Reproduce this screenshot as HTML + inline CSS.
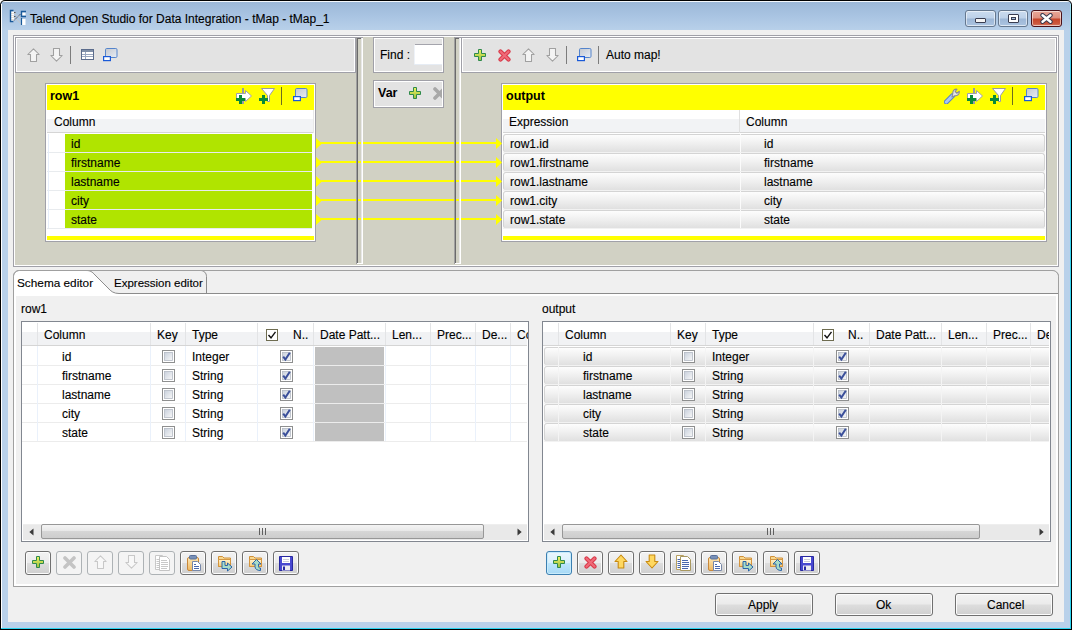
<!DOCTYPE html><html><head><meta charset="utf-8"><style>
html,body{margin:0;padding:0;width:1072px;height:630px;overflow:hidden;background:#fff}
body{position:relative;font-family:"Liberation Sans",sans-serif;font-size:12px;color:#000}
div,svg{position:absolute}
.t{white-space:nowrap;line-height:14px;height:14px;-webkit-text-stroke:0.12px #000}
.b{white-space:nowrap;line-height:14px;height:14px;font-weight:bold;font-size:12.5px}
</style></head><body>
<div style="left:0px;top:0px;width:1072px;height:630px;background:#000;border-radius:5px 5px 0 0"></div>
<div style="left:1px;top:1px;width:1070px;height:628px;background:linear-gradient(#f4f8fc 0px,#f4f8fc 1px,#9cb8d8 1px,#a9c4e2 15px,#b9d1ea 30px,#b9d1ea 100%);border-radius:4px 4px 0 0"></div>
<div style="left:1px;top:4px;width:1px;height:625px;background:#fff"></div>
<div style="left:1070px;top:4px;width:1px;height:625px;background:linear-gradient(#a8e4f4,#3ad4f0 60px,#2ad4f0)"></div>
<div style="left:1px;top:628px;width:1070px;height:1px;background:#2ad4f0"></div>
<div style="left:8px;top:30px;width:1056px;height:592px;background:#f0f0f0"></div>
<div class="t" style="left:30px;top:12px;color:#000">Talend Open Studio for Data Integration - tMap - tMap_1</div>
<svg style="left:8px;top:7px" width="20" height="20" viewBox="0 0 20 20">
<rect x="3" y="4.5" width="3" height="10" fill="#fff"/>
<path d="M3 6.5h3M3 8.5h3M3 10.5h3M3 12.5h3" stroke="#e0d8d0" stroke-width="0.8"/>
<path d="M5.5 3.5H2.5V14.5H5.5" stroke="#1a5a9a" stroke-width="1.4" fill="none"/>
<path d="M6 5.5L13.5 12.5M6 9.5L13.5 17.5" stroke="#c8c8c8" stroke-width="1"/>
<path d="M6 13.5L13.5 6" stroke="#404048" stroke-width="1" stroke-dasharray="1.2 0.8"/>
<path d="M6 5.5h1.5M6 9.5h1.5" stroke="#555" stroke-width="1"/>
<rect x="14" y="5.5" width="3.5" height="3" fill="#fff"/>
<path d="M18 4.5H13.5V9.5H18" stroke="#1a5a9a" stroke-width="1.4" fill="none"/>
<rect x="14" y="12" width="3.5" height="6" fill="#fff"/>
<path d="M13.5 11V18" stroke="#1a5a9a" stroke-width="1.2"/>
</svg>
<div style="left:965px;top:10px;width:31px;height:17px;box-sizing:border-box;border:1px solid #65788f;border-radius:3px;background:linear-gradient(#cbdcef 0,#bdd1e9 7px,#9db7d6 8px,#a9c2df 14px,#bcd2ea 100%);box-shadow:inset 0 0 0 1px rgba(255,255,255,.55)"></div>
<div style="left:998px;top:10px;width:30px;height:17px;box-sizing:border-box;border:1px solid #65788f;border-radius:3px;background:linear-gradient(#cbdcef 0,#bdd1e9 7px,#9db7d6 8px,#a9c2df 14px,#bcd2ea 100%);box-shadow:inset 0 0 0 1px rgba(255,255,255,.55)"></div>
<div style="left:1031px;top:10px;width:31px;height:17px;box-sizing:border-box;border:1px solid #4a1018;border-radius:3px;background:linear-gradient(#eaa898 0,#de9080 7px,#c6452a 8px,#cc5a40 13px,#dc8a78 100%);box-shadow:inset 0 0 0 1px rgba(255,255,255,.55)"></div>
<div style="left:975px;top:18px;width:11px;height:5px;box-sizing:border-box;border:1px solid #3a3e52;background:#f4f4f4;border-radius:1px"></div>
<div style="left:1008px;top:14px;width:11px;height:9px;box-sizing:border-box;border:1px solid #3a3e52;background:#fff;border-radius:1px"></div>
<div style="left:1011px;top:17px;width:5px;height:3px;box-sizing:border-box;border:1px solid #3a3e52;background:#a8c0dc"></div>
<svg style="left:1040px;top:13px" width="13" height="11" viewBox="0 0 13 11">
<path d="M2.5 2.2L10.5 8.8M10.5 2.2L2.5 8.8" stroke="#3a3a4e" stroke-width="4.4" stroke-linecap="round"/>
<path d="M2.5 2.2L10.5 8.8M10.5 2.2L2.5 8.8" stroke="#fff" stroke-width="2.4" stroke-linecap="round"/>
</svg>
<div style="left:13px;top:35px;width:1046px;height:232px;box-sizing:border-box;border:1px solid #a0a0a8"></div>
<div style="left:14px;top:36px;width:1044px;height:230px;box-sizing:border-box;border:1px solid #fff"></div>
<div style="left:15px;top:37px;width:1042px;height:228px;background:#d1d1c4"></div>
<div style="left:15px;top:37px;width:341px;height:36px;background:#e3e3e3"></div>
<div style="left:15px;top:37px;width:341px;height:36px;box-sizing:border-box;border:1px solid #a0a0a8"></div>
<div style="left:16px;top:38px;width:339px;height:34px;box-sizing:border-box;border:1px solid #fff"></div>
<div style="left:356px;top:37px;width:1px;height:227px;background:#a0a0a0"></div>
<div style="left:357px;top:38px;width:1px;height:225px;background:#6a6a6a"></div>
<div style="left:357px;top:38px;width:5px;height:1px;background:#6a6a6a"></div>
<div style="left:356px;top:37px;width:7px;height:1px;background:#a0a0a8"></div>
<div style="left:362px;top:38px;width:1px;height:226px;background:#fff"></div>
<div style="left:356px;top:263px;width:7px;height:1px;background:#fff"></div>
<div style="left:373px;top:37px;width:71px;height:36px;background:#e3e3e3"></div>
<div style="left:373px;top:37px;width:71px;height:36px;box-sizing:border-box;border:1px solid #a0a0a8"></div>
<div style="left:374px;top:38px;width:69px;height:34px;box-sizing:border-box;border:1px solid #fff"></div>
<div style="left:454px;top:37px;width:1px;height:227px;background:#a0a0a0"></div>
<div style="left:455px;top:38px;width:1px;height:225px;background:#6a6a6a"></div>
<div style="left:455px;top:38px;width:5px;height:1px;background:#6a6a6a"></div>
<div style="left:454px;top:37px;width:7px;height:1px;background:#a0a0a8"></div>
<div style="left:460px;top:38px;width:1px;height:226px;background:#fff"></div>
<div style="left:454px;top:263px;width:7px;height:1px;background:#fff"></div>
<div style="left:461px;top:37px;width:596px;height:36px;background:#e3e3e3"></div>
<div style="left:461px;top:37px;width:596px;height:36px;box-sizing:border-box;border:1px solid #a0a0a8"></div>
<div style="left:462px;top:38px;width:594px;height:34px;box-sizing:border-box;border:1px solid #fff"></div>
<svg style="left:27px;top:48px" width="13" height="14" viewBox="0 0 13 14"><path d="M6.5 0.8L12.2 6.5H9.5V13.5H3.5V6.5H0.8Z" fill="#f4f4f4" stroke="#a0a0a0" stroke-width="1.05" stroke-linejoin="round"/></svg>
<svg style="left:50px;top:48px" width="13" height="14" viewBox="0 0 13 14"><path d="M6.5 13.2L12.2 7.5H9.5V0.5H3.5V7.5H0.8Z" fill="#f4f4f4" stroke="#a0a0a0" stroke-width="1.05" stroke-linejoin="round"/></svg>
<div style="left:70px;top:46px;width:1px;height:18px;background:#7c7c7c"></div>
<svg style="left:81px;top:49px" width="13" height="11" viewBox="0 0 13 11"><rect x="0.5" y="0.5" width="12" height="10" fill="#fff" stroke="#5b6c8c"/><rect x="1" y="1" width="11" height="2" fill="#8090a8"/><path d="M1 5.5h11M1 7.5h11M4.5 3v7" stroke="#9aa8c0" stroke-width="1"/></svg>
<svg style="left:103px;top:48px" width="15" height="14" viewBox="0 0 15 14"><defs><linearGradient id="wg" x1="0" y1="0" x2="1" y2="1"><stop offset="0" stop-color="#c4c8d0"/><stop offset="1" stop-color="#e6ecf4"/></linearGradient></defs><rect x="2.5" y="0.5" width="11.5" height="9" rx="1.2" fill="url(#wg)" stroke="#5484cc" stroke-width="1"/><rect x="0.6" y="8.6" width="6.8" height="4" fill="#fff" stroke="#1a5ad8" stroke-width="1.2"/></svg>
<div class="t" style="left:380px;top:48px;">Find :</div>
<div style="left:415px;top:45px;width:27px;height:19px;background:#fff"></div>
<div style="left:415px;top:44px;width:27px;height:1px;background:#a4a4ac"></div>
<div style="left:414px;top:45px;width:1px;height:19px;background:#eef2f8"></div>
<div style="left:414px;top:64px;width:28px;height:1px;background:#e6ecf4"></div>
<svg style="left:474px;top:49px" width="12" height="12" viewBox="0 0 12 12"><defs><linearGradient id="pg" x1="0" y1="0" x2="0" y2="1"><stop offset="0" stop-color="#f2f462"/><stop offset="1" stop-color="#98c040"/></linearGradient></defs><path d="M4.5 0.5h3v4h4v3h-4v4h-3v-4h-4v-3h4z" fill="url(#pg)" stroke="#2e8a4c" stroke-width="1"/></svg>
<svg style="left:498px;top:49px" width="13" height="13" viewBox="0 0 13 13"><path d="M2.5 2.5L10.5 10.5M10.5 2.5L2.5 10.5" stroke="#d83848" stroke-width="4.2" stroke-linecap="round"/><path d="M2.5 2.5L10.5 10.5M10.5 2.5L2.5 10.5" stroke="#f06a78" stroke-width="2.2" stroke-linecap="round"/></svg>
<svg style="left:522px;top:48px" width="13" height="14" viewBox="0 0 13 14"><path d="M6.5 0.8L12.2 6.5H9.5V13.5H3.5V6.5H0.8Z" fill="#f4f4f4" stroke="#a0a0a0" stroke-width="1.05" stroke-linejoin="round"/></svg>
<svg style="left:546px;top:48px" width="13" height="14" viewBox="0 0 13 14"><path d="M6.5 13.2L12.2 7.5H9.5V0.5H3.5V7.5H0.8Z" fill="#f4f4f4" stroke="#a0a0a0" stroke-width="1.05" stroke-linejoin="round"/></svg>
<div style="left:566px;top:46px;width:1px;height:18px;background:#7c7c7c"></div>
<svg style="left:577px;top:48px" width="15" height="14" viewBox="0 0 15 14"><defs><linearGradient id="wg" x1="0" y1="0" x2="1" y2="1"><stop offset="0" stop-color="#c4c8d0"/><stop offset="1" stop-color="#e6ecf4"/></linearGradient></defs><rect x="2.5" y="0.5" width="11.5" height="9" rx="1.2" fill="url(#wg)" stroke="#5484cc" stroke-width="1"/><rect x="0.6" y="8.6" width="6.8" height="4" fill="#fff" stroke="#1a5ad8" stroke-width="1.2"/></svg>
<div style="left:598px;top:46px;width:1px;height:18px;background:#7c7c7c"></div>
<div class="t" style="left:606px;top:48px;">Auto map!</div>
<div style="left:45px;top:83px;width:271px;height:159px;background:#fff"></div>
<div style="left:45px;top:83px;width:271px;height:159px;box-sizing:border-box;border:1px solid #a0a0a8"></div>
<div style="left:46px;top:84px;width:269px;height:157px;box-sizing:border-box;border:1px solid #fff"></div>
<div style="left:47px;top:85px;width:267px;height:25px;background:#ffff00"></div>
<div style="left:47px;top:119px;width:267px;height:13px;background:#f2f3f5"></div>
<div style="left:47px;top:132px;width:267px;height:1px;background:#d5d5d5"></div>
<div style="left:47px;top:236px;width:267px;height:4px;background:#ffff00"></div>
<div class="b" style="left:50px;top:89px;">row1</div>
<svg style="left:236px;top:88px" width="17" height="16" viewBox="0 0 17 16"><rect x="6" y="0" width="2" height="16" fill="#9a9aa4"/><path d="M0.5 5.5H9.5V2.5L15.5 8L9.5 13.5V10.5H0.5Z" fill="#fff" stroke="#a0a0a8" stroke-width="1"/><path d="M3 7h3v3h3v3h-3v3h-3v-3h-3v-3h3z" fill="#0a8a3a"/></svg>
<svg style="left:259px;top:88px" width="17" height="16" viewBox="0 0 17 16"><path d="M2.5 0.5H15.5L10.5 7.5V13.5H8.5V7.5Z" fill="#fff" stroke="#9a9aa4" stroke-width="1"/><path d="M3 7h3v3h3v3h-3v3h-3v-3h-3v-3h3z" fill="#0a8a3a"/></svg>
<div style="left:281px;top:87px;width:1px;height:18px;background:#6e6e20"></div>
<svg style="left:293px;top:88px" width="15" height="14" viewBox="0 0 15 14"><defs><linearGradient id="wg" x1="0" y1="0" x2="1" y2="1"><stop offset="0" stop-color="#c4c8d0"/><stop offset="1" stop-color="#e6ecf4"/></linearGradient></defs><rect x="2.5" y="0.5" width="11.5" height="9" rx="1.2" fill="url(#wg)" stroke="#5484cc" stroke-width="1"/><rect x="0.6" y="8.6" width="6.8" height="4" fill="#fff" stroke="#1a5ad8" stroke-width="1.2"/></svg>
<div class="t" style="left:54px;top:115px;">Column</div>
<div style="left:313px;top:110px;width:1px;height:23px;background:#e8e8e8"></div>
<div style="left:65px;top:134px;width:247px;height:18px;background:#b0e400"></div>
<div style="left:47px;top:152px;width:265px;height:1px;background:#e8ebee"></div>
<div class="t" style="left:71px;top:137px;">id</div>
<div style="left:65px;top:153px;width:247px;height:18px;background:#b0e400"></div>
<div style="left:47px;top:171px;width:265px;height:1px;background:#e8ebee"></div>
<div class="t" style="left:71px;top:156px;">firstname</div>
<div style="left:65px;top:172px;width:247px;height:18px;background:#b0e400"></div>
<div style="left:47px;top:190px;width:265px;height:1px;background:#e8ebee"></div>
<div class="t" style="left:71px;top:175px;">lastname</div>
<div style="left:65px;top:191px;width:247px;height:18px;background:#b0e400"></div>
<div style="left:47px;top:209px;width:265px;height:1px;background:#e8ebee"></div>
<div class="t" style="left:71px;top:194px;">city</div>
<div style="left:65px;top:210px;width:247px;height:18px;background:#b0e400"></div>
<div style="left:47px;top:228px;width:265px;height:1px;background:#e8ebee"></div>
<div class="t" style="left:71px;top:213px;">state</div>
<div style="left:48px;top:134px;width:1px;height:94px;background:#e6eefa"></div>
<div style="left:373px;top:80px;width:71px;height:28px;background:#e3e3e3"></div>
<div style="left:373px;top:80px;width:71px;height:28px;box-sizing:border-box;border:1px solid #a0a0a8"></div>
<div style="left:374px;top:81px;width:69px;height:26px;box-sizing:border-box;border:1px solid #fff"></div>
<div class="b" style="left:378px;top:86px;">Var</div>
<svg style="left:409px;top:87px" width="12" height="12" viewBox="0 0 12 12"><defs><linearGradient id="pg" x1="0" y1="0" x2="0" y2="1"><stop offset="0" stop-color="#f2f462"/><stop offset="1" stop-color="#98c040"/></linearGradient></defs><path d="M4.5 0.5h3v4h4v3h-4v4h-3v-4h-4v-3h4z" fill="url(#pg)" stroke="#2e8a4c" stroke-width="1"/></svg>
<svg style="left:433px;top:87px" width="9" height="13" viewBox="0 0 9 13"><path d="M2 2L11 11M11 2L2 11" stroke="#a8a8a8" stroke-width="3.6" stroke-linecap="round"/></svg>
<div style="left:501px;top:83px;width:546px;height:159px;background:#fff"></div>
<div style="left:501px;top:83px;width:546px;height:159px;box-sizing:border-box;border:1px solid #a0a0a8"></div>
<div style="left:502px;top:84px;width:544px;height:157px;box-sizing:border-box;border:1px solid #fff"></div>
<div style="left:503px;top:85px;width:542px;height:25px;background:#ffff00"></div>
<div style="left:503px;top:119px;width:542px;height:13px;background:#f2f3f5"></div>
<div style="left:503px;top:132px;width:542px;height:1px;background:#d5d5d5"></div>
<div style="left:503px;top:236px;width:542px;height:4px;background:#ffff00"></div>
<div class="b" style="left:506px;top:89px;">output</div>
<svg style="left:944px;top:88px" width="17" height="16" viewBox="0 0 17 16"><path d="M2.3 14L9 7.3" stroke="#5a82c4" stroke-width="5" stroke-linecap="round"/><path d="M2.3 14L9 7.3" stroke="#a8c6f2" stroke-width="3" stroke-linecap="round"/><path d="M8 9L8.8 5.5C8.5 2.5 10.5 0.8 13 1.2L11.2 3.5L12.8 5.2L15.3 3.3C15.8 6 13.6 8 10.8 7.8Z" fill="#e4e4e4" stroke="#8c8c94" stroke-width="1.1" stroke-linejoin="round"/></svg>
<svg style="left:967px;top:88px" width="17" height="16" viewBox="0 0 17 16"><rect x="6" y="0" width="2" height="16" fill="#9a9aa4"/><path d="M0.5 5.5H9.5V2.5L15.5 8L9.5 13.5V10.5H0.5Z" fill="#fff" stroke="#a0a0a8" stroke-width="1"/><path d="M3 7h3v3h3v3h-3v3h-3v-3h-3v-3h3z" fill="#0a8a3a"/></svg>
<svg style="left:990px;top:88px" width="17" height="16" viewBox="0 0 17 16"><path d="M2.5 0.5H15.5L10.5 7.5V13.5H8.5V7.5Z" fill="#fff" stroke="#9a9aa4" stroke-width="1"/><path d="M3 7h3v3h3v3h-3v3h-3v-3h-3v-3h3z" fill="#0a8a3a"/></svg>
<div style="left:1012px;top:87px;width:1px;height:18px;background:#6e6e20"></div>
<svg style="left:1024px;top:88px" width="15" height="14" viewBox="0 0 15 14"><defs><linearGradient id="wg" x1="0" y1="0" x2="1" y2="1"><stop offset="0" stop-color="#c4c8d0"/><stop offset="1" stop-color="#e6ecf4"/></linearGradient></defs><rect x="2.5" y="0.5" width="11.5" height="9" rx="1.2" fill="url(#wg)" stroke="#5484cc" stroke-width="1"/><rect x="0.6" y="8.6" width="6.8" height="4" fill="#fff" stroke="#1a5ad8" stroke-width="1.2"/></svg>
<div class="t" style="left:509px;top:115px;">Expression</div>
<div class="t" style="left:746px;top:115px;">Column</div>
<div style="left:739px;top:110px;width:1px;height:23px;background:#e0e0e0"></div>
<div style="left:503px;top:152px;width:542px;height:1px;background:#f2f2f2"></div>
<div style="left:503px;top:134px;width:542px;height:18px;box-sizing:border-box;border:1px solid #d4d4d4;border-bottom:0;border-radius:3px 3px 2px 2px;background:linear-gradient(#fdfdfd,#f2f2f2 40%,#e0e0e0)"></div>
<div style="left:740px;top:134px;width:1px;height:18px;background:#fbfbfb"></div>
<div class="t" style="left:510px;top:137px;">row1.id</div>
<div class="t" style="left:764px;top:137px;">id</div>
<div style="left:503px;top:171px;width:542px;height:1px;background:#f2f2f2"></div>
<div style="left:503px;top:153px;width:542px;height:18px;box-sizing:border-box;border:1px solid #d4d4d4;border-bottom:0;border-radius:3px 3px 2px 2px;background:linear-gradient(#fdfdfd,#f2f2f2 40%,#e0e0e0)"></div>
<div style="left:740px;top:153px;width:1px;height:18px;background:#fbfbfb"></div>
<div class="t" style="left:510px;top:156px;">row1.firstname</div>
<div class="t" style="left:764px;top:156px;">firstname</div>
<div style="left:503px;top:190px;width:542px;height:1px;background:#f2f2f2"></div>
<div style="left:503px;top:172px;width:542px;height:18px;box-sizing:border-box;border:1px solid #d4d4d4;border-bottom:0;border-radius:3px 3px 2px 2px;background:linear-gradient(#fdfdfd,#f2f2f2 40%,#e0e0e0)"></div>
<div style="left:740px;top:172px;width:1px;height:18px;background:#fbfbfb"></div>
<div class="t" style="left:510px;top:175px;">row1.lastname</div>
<div class="t" style="left:764px;top:175px;">lastname</div>
<div style="left:503px;top:209px;width:542px;height:1px;background:#f2f2f2"></div>
<div style="left:503px;top:191px;width:542px;height:18px;box-sizing:border-box;border:1px solid #d4d4d4;border-bottom:0;border-radius:3px 3px 2px 2px;background:linear-gradient(#fdfdfd,#f2f2f2 40%,#e0e0e0)"></div>
<div style="left:740px;top:191px;width:1px;height:18px;background:#fbfbfb"></div>
<div class="t" style="left:510px;top:194px;">row1.city</div>
<div class="t" style="left:764px;top:194px;">city</div>
<div style="left:503px;top:228px;width:542px;height:1px;background:#f2f2f2"></div>
<div style="left:503px;top:210px;width:542px;height:18px;box-sizing:border-box;border:1px solid #d4d4d4;border-bottom:0;border-radius:3px 3px 2px 2px;background:linear-gradient(#fdfdfd,#f2f2f2 40%,#e0e0e0)"></div>
<div style="left:740px;top:210px;width:1px;height:18px;background:#fbfbfb"></div>
<div class="t" style="left:510px;top:213px;">row1.state</div>
<div class="t" style="left:764px;top:213px;">state</div>
<div style="left:316px;top:142px;width:185px;height:2px;background:#ffff00"></div>
<svg style="left:316px;top:138px" width="6" height="11" viewBox="0 0 6 11"><path d="M0 0L6 5.5L0 11Z" fill="#ffff00"/></svg>
<svg style="left:496px;top:138px" width="6" height="11" viewBox="0 0 6 11"><path d="M0 0L6 5.5L0 11Z" fill="#ffff00"/></svg>
<div style="left:316px;top:161px;width:185px;height:2px;background:#ffff00"></div>
<svg style="left:316px;top:157px" width="6" height="11" viewBox="0 0 6 11"><path d="M0 0L6 5.5L0 11Z" fill="#ffff00"/></svg>
<svg style="left:496px;top:157px" width="6" height="11" viewBox="0 0 6 11"><path d="M0 0L6 5.5L0 11Z" fill="#ffff00"/></svg>
<div style="left:316px;top:180px;width:185px;height:2px;background:#ffff00"></div>
<svg style="left:316px;top:176px" width="6" height="11" viewBox="0 0 6 11"><path d="M0 0L6 5.5L0 11Z" fill="#ffff00"/></svg>
<svg style="left:496px;top:176px" width="6" height="11" viewBox="0 0 6 11"><path d="M0 0L6 5.5L0 11Z" fill="#ffff00"/></svg>
<div style="left:316px;top:199px;width:185px;height:2px;background:#ffff00"></div>
<svg style="left:316px;top:195px" width="6" height="11" viewBox="0 0 6 11"><path d="M0 0L6 5.5L0 11Z" fill="#ffff00"/></svg>
<svg style="left:496px;top:195px" width="6" height="11" viewBox="0 0 6 11"><path d="M0 0L6 5.5L0 11Z" fill="#ffff00"/></svg>
<div style="left:316px;top:218px;width:185px;height:2px;background:#ffff00"></div>
<svg style="left:316px;top:214px" width="6" height="11" viewBox="0 0 6 11"><path d="M0 0L6 5.5L0 11Z" fill="#ffff00"/></svg>
<svg style="left:496px;top:214px" width="6" height="11" viewBox="0 0 6 11"><path d="M0 0L6 5.5L0 11Z" fill="#ffff00"/></svg>
<div style="left:356px;top:37px;width:1px;height:227px;background:#a0a0a0"></div>
<div style="left:357px;top:38px;width:1px;height:225px;background:#6a6a6a"></div>
<div style="left:361px;top:38px;width:1px;height:225px;background:#e8e8e8"></div>
<div style="left:362px;top:38px;width:1px;height:226px;background:#fff"></div>
<div style="left:454px;top:37px;width:1px;height:227px;background:#a0a0a0"></div>
<div style="left:455px;top:38px;width:1px;height:225px;background:#6a6a6a"></div>
<div style="left:459px;top:38px;width:1px;height:225px;background:#e8e8e8"></div>
<div style="left:460px;top:38px;width:1px;height:226px;background:#fff"></div>
<svg style="left:13px;top:270px" width="1046" height="317" viewBox="0 0 1046 317"><path d="M0.5 316.5 V6.5 C0.5 3 3 0.5 6.5 0.5 H1039 C1042.5 0.5 1045.5 3 1045.5 6.5 V316.5 Z" fill="#fff" stroke="#a0a0a0" stroke-width="1"/><path d="M73 0.5 C77 0.5 79 1.5 82 5 L95 18 C98 21.5 101 23.5 106 23.5 L1045 23.5 L1045 6.5 C1045 3 1042.5 1 1039 1 L72 1 Z" fill="#f0f0f0"/><path d="M73 0.5 C77 0.5 79 1.5 82 5 L95 18 C98 21.5 101 23.5 106 23.5 L1045 23.5" fill="none" stroke="#8c8c8c" stroke-width="1"/><path d="M193.5 23.5 V6.5 C193.5 3 191 0.5 187.5 0.5" fill="none" stroke="#8c8c8c" stroke-width="1"/><path d="M0.5 316.5 V6.5 C0.5 3 3 0.5 6.5 0.5 H1039 C1042.5 0.5 1045.5 3 1045.5 6.5 V316.5 Z" fill="none" stroke="#a0a0a0" stroke-width="1"/></svg>
<div style="left:16px;top:296px;width:1040px;height:288px;background:#f0f0f0"></div>
<div class="t" style="left:17px;top:276px;font-size:11.8px">Schema editor</div>
<div class="t" style="left:114px;top:276px;font-size:11.5px">Expression editor</div>
<div class="t" style="left:21px;top:302px;">row1</div>
<div style="left:21px;top:321px;width:508px;height:221px;box-sizing:border-box;border:1px solid #828790"></div>
<div style="left:22px;top:322px;width:506px;height:219px;background:#fff"></div>
<div style="left:22px;top:332px;width:505px;height:13px;background:#f1f2f4"></div>
<div style="left:22px;top:345px;width:505px;height:1px;background:#d5d5d5"></div>
<div style="left:37px;top:323px;width:1px;height:22px;background:#e3e4e6"></div>
<div style="left:150px;top:323px;width:1px;height:22px;background:#e3e4e6"></div>
<div style="left:185px;top:323px;width:1px;height:22px;background:#e3e4e6"></div>
<div style="left:257px;top:323px;width:1px;height:22px;background:#e3e4e6"></div>
<div style="left:313px;top:323px;width:1px;height:22px;background:#e3e4e6"></div>
<div style="left:385px;top:323px;width:1px;height:22px;background:#e3e4e6"></div>
<div style="left:430px;top:323px;width:1px;height:22px;background:#e3e4e6"></div>
<div style="left:475px;top:323px;width:1px;height:22px;background:#e3e4e6"></div>
<div style="left:510px;top:323px;width:1px;height:22px;background:#e3e4e6"></div>
<div class="t" style="left:44px;top:328px;">Column</div>
<div class="t" style="left:157px;top:328px;">Key</div>
<div class="t" style="left:192px;top:328px;">Type</div>
<div class="t" style="left:293px;top:328px;">N..</div>
<div class="t" style="left:320px;top:328px;">Date Patt...</div>
<div class="t" style="left:392px;top:328px;">Len...</div>
<div class="t" style="left:437px;top:328px;">Prec...</div>
<div class="t" style="left:482px;top:328px;">De...</div>
<div class="t" style="left:517px;top:328px;">Co</div>
<div style="left:22px;top:365px;width:505px;height:1px;background:#ececec"></div>
<div style="left:37px;top:346px;width:1px;height:19px;background:#eaf1fb"></div>
<div style="left:150px;top:346px;width:1px;height:19px;background:#eaf1fb"></div>
<div style="left:185px;top:346px;width:1px;height:19px;background:#eaf1fb"></div>
<div style="left:257px;top:346px;width:1px;height:19px;background:#eaf1fb"></div>
<div style="left:313px;top:346px;width:1px;height:19px;background:#eaf1fb"></div>
<div style="left:385px;top:346px;width:1px;height:19px;background:#eaf1fb"></div>
<div style="left:430px;top:346px;width:1px;height:19px;background:#eaf1fb"></div>
<div style="left:475px;top:346px;width:1px;height:19px;background:#eaf1fb"></div>
<div style="left:510px;top:346px;width:1px;height:19px;background:#eaf1fb"></div>
<div style="left:315px;top:347px;width:69px;height:18px;background:#c0c0c0"></div>
<div class="t" style="left:62px;top:350px;">id</div>
<div class="t" style="left:192px;top:350px;">Integer</div>
<svg style="left:162px;top:350px" width="13" height="13" viewBox="0 0 13 13"><defs><linearGradient id="cbg" x1="0" y1="0" x2="1" y2="1"><stop offset="0" stop-color="#c8d0dc"/><stop offset="1" stop-color="#f8f8f8"/></linearGradient></defs><rect x="0.5" y="0.5" width="12" height="12" fill="#fff" stroke="#8e8f8f"/><rect x="2.5" y="2.5" width="8" height="8" fill="url(#cbg)" stroke="#b4bac4" stroke-width="0.8"/></svg>
<svg style="left:280px;top:350px" width="13" height="13" viewBox="0 0 13 13"><defs><linearGradient id="cbg" x1="0" y1="0" x2="1" y2="1"><stop offset="0" stop-color="#c8d0dc"/><stop offset="1" stop-color="#f8f8f8"/></linearGradient></defs><rect x="0.5" y="0.5" width="12" height="12" fill="#fff" stroke="#8e8f8f"/><rect x="2.5" y="2.5" width="8" height="8" fill="url(#cbg)" stroke="#b4bac4" stroke-width="0.8"/><path d="M3.2 6.6L5.4 9.6L9.8 2.8" fill="none" stroke="#3a4f9a" stroke-width="2"/></svg>
<div style="left:22px;top:384px;width:505px;height:1px;background:#ececec"></div>
<div style="left:37px;top:365px;width:1px;height:19px;background:#eaf1fb"></div>
<div style="left:150px;top:365px;width:1px;height:19px;background:#eaf1fb"></div>
<div style="left:185px;top:365px;width:1px;height:19px;background:#eaf1fb"></div>
<div style="left:257px;top:365px;width:1px;height:19px;background:#eaf1fb"></div>
<div style="left:313px;top:365px;width:1px;height:19px;background:#eaf1fb"></div>
<div style="left:385px;top:365px;width:1px;height:19px;background:#eaf1fb"></div>
<div style="left:430px;top:365px;width:1px;height:19px;background:#eaf1fb"></div>
<div style="left:475px;top:365px;width:1px;height:19px;background:#eaf1fb"></div>
<div style="left:510px;top:365px;width:1px;height:19px;background:#eaf1fb"></div>
<div style="left:315px;top:366px;width:69px;height:18px;background:#c0c0c0"></div>
<div class="t" style="left:62px;top:369px;">firstname</div>
<div class="t" style="left:192px;top:369px;">String</div>
<svg style="left:162px;top:369px" width="13" height="13" viewBox="0 0 13 13"><defs><linearGradient id="cbg" x1="0" y1="0" x2="1" y2="1"><stop offset="0" stop-color="#c8d0dc"/><stop offset="1" stop-color="#f8f8f8"/></linearGradient></defs><rect x="0.5" y="0.5" width="12" height="12" fill="#fff" stroke="#8e8f8f"/><rect x="2.5" y="2.5" width="8" height="8" fill="url(#cbg)" stroke="#b4bac4" stroke-width="0.8"/></svg>
<svg style="left:280px;top:369px" width="13" height="13" viewBox="0 0 13 13"><defs><linearGradient id="cbg" x1="0" y1="0" x2="1" y2="1"><stop offset="0" stop-color="#c8d0dc"/><stop offset="1" stop-color="#f8f8f8"/></linearGradient></defs><rect x="0.5" y="0.5" width="12" height="12" fill="#fff" stroke="#8e8f8f"/><rect x="2.5" y="2.5" width="8" height="8" fill="url(#cbg)" stroke="#b4bac4" stroke-width="0.8"/><path d="M3.2 6.6L5.4 9.6L9.8 2.8" fill="none" stroke="#3a4f9a" stroke-width="2"/></svg>
<div style="left:22px;top:403px;width:505px;height:1px;background:#ececec"></div>
<div style="left:37px;top:384px;width:1px;height:19px;background:#eaf1fb"></div>
<div style="left:150px;top:384px;width:1px;height:19px;background:#eaf1fb"></div>
<div style="left:185px;top:384px;width:1px;height:19px;background:#eaf1fb"></div>
<div style="left:257px;top:384px;width:1px;height:19px;background:#eaf1fb"></div>
<div style="left:313px;top:384px;width:1px;height:19px;background:#eaf1fb"></div>
<div style="left:385px;top:384px;width:1px;height:19px;background:#eaf1fb"></div>
<div style="left:430px;top:384px;width:1px;height:19px;background:#eaf1fb"></div>
<div style="left:475px;top:384px;width:1px;height:19px;background:#eaf1fb"></div>
<div style="left:510px;top:384px;width:1px;height:19px;background:#eaf1fb"></div>
<div style="left:315px;top:385px;width:69px;height:18px;background:#c0c0c0"></div>
<div class="t" style="left:62px;top:388px;">lastname</div>
<div class="t" style="left:192px;top:388px;">String</div>
<svg style="left:162px;top:388px" width="13" height="13" viewBox="0 0 13 13"><defs><linearGradient id="cbg" x1="0" y1="0" x2="1" y2="1"><stop offset="0" stop-color="#c8d0dc"/><stop offset="1" stop-color="#f8f8f8"/></linearGradient></defs><rect x="0.5" y="0.5" width="12" height="12" fill="#fff" stroke="#8e8f8f"/><rect x="2.5" y="2.5" width="8" height="8" fill="url(#cbg)" stroke="#b4bac4" stroke-width="0.8"/></svg>
<svg style="left:280px;top:388px" width="13" height="13" viewBox="0 0 13 13"><defs><linearGradient id="cbg" x1="0" y1="0" x2="1" y2="1"><stop offset="0" stop-color="#c8d0dc"/><stop offset="1" stop-color="#f8f8f8"/></linearGradient></defs><rect x="0.5" y="0.5" width="12" height="12" fill="#fff" stroke="#8e8f8f"/><rect x="2.5" y="2.5" width="8" height="8" fill="url(#cbg)" stroke="#b4bac4" stroke-width="0.8"/><path d="M3.2 6.6L5.4 9.6L9.8 2.8" fill="none" stroke="#3a4f9a" stroke-width="2"/></svg>
<div style="left:22px;top:422px;width:505px;height:1px;background:#ececec"></div>
<div style="left:37px;top:403px;width:1px;height:19px;background:#eaf1fb"></div>
<div style="left:150px;top:403px;width:1px;height:19px;background:#eaf1fb"></div>
<div style="left:185px;top:403px;width:1px;height:19px;background:#eaf1fb"></div>
<div style="left:257px;top:403px;width:1px;height:19px;background:#eaf1fb"></div>
<div style="left:313px;top:403px;width:1px;height:19px;background:#eaf1fb"></div>
<div style="left:385px;top:403px;width:1px;height:19px;background:#eaf1fb"></div>
<div style="left:430px;top:403px;width:1px;height:19px;background:#eaf1fb"></div>
<div style="left:475px;top:403px;width:1px;height:19px;background:#eaf1fb"></div>
<div style="left:510px;top:403px;width:1px;height:19px;background:#eaf1fb"></div>
<div style="left:315px;top:404px;width:69px;height:18px;background:#c0c0c0"></div>
<div class="t" style="left:62px;top:407px;">city</div>
<div class="t" style="left:192px;top:407px;">String</div>
<svg style="left:162px;top:407px" width="13" height="13" viewBox="0 0 13 13"><defs><linearGradient id="cbg" x1="0" y1="0" x2="1" y2="1"><stop offset="0" stop-color="#c8d0dc"/><stop offset="1" stop-color="#f8f8f8"/></linearGradient></defs><rect x="0.5" y="0.5" width="12" height="12" fill="#fff" stroke="#8e8f8f"/><rect x="2.5" y="2.5" width="8" height="8" fill="url(#cbg)" stroke="#b4bac4" stroke-width="0.8"/></svg>
<svg style="left:280px;top:407px" width="13" height="13" viewBox="0 0 13 13"><defs><linearGradient id="cbg" x1="0" y1="0" x2="1" y2="1"><stop offset="0" stop-color="#c8d0dc"/><stop offset="1" stop-color="#f8f8f8"/></linearGradient></defs><rect x="0.5" y="0.5" width="12" height="12" fill="#fff" stroke="#8e8f8f"/><rect x="2.5" y="2.5" width="8" height="8" fill="url(#cbg)" stroke="#b4bac4" stroke-width="0.8"/><path d="M3.2 6.6L5.4 9.6L9.8 2.8" fill="none" stroke="#3a4f9a" stroke-width="2"/></svg>
<div style="left:22px;top:441px;width:505px;height:1px;background:#ececec"></div>
<div style="left:37px;top:422px;width:1px;height:19px;background:#eaf1fb"></div>
<div style="left:150px;top:422px;width:1px;height:19px;background:#eaf1fb"></div>
<div style="left:185px;top:422px;width:1px;height:19px;background:#eaf1fb"></div>
<div style="left:257px;top:422px;width:1px;height:19px;background:#eaf1fb"></div>
<div style="left:313px;top:422px;width:1px;height:19px;background:#eaf1fb"></div>
<div style="left:385px;top:422px;width:1px;height:19px;background:#eaf1fb"></div>
<div style="left:430px;top:422px;width:1px;height:19px;background:#eaf1fb"></div>
<div style="left:475px;top:422px;width:1px;height:19px;background:#eaf1fb"></div>
<div style="left:510px;top:422px;width:1px;height:19px;background:#eaf1fb"></div>
<div style="left:315px;top:423px;width:69px;height:18px;background:#c0c0c0"></div>
<div class="t" style="left:62px;top:426px;">state</div>
<div class="t" style="left:192px;top:426px;">String</div>
<svg style="left:162px;top:426px" width="13" height="13" viewBox="0 0 13 13"><defs><linearGradient id="cbg" x1="0" y1="0" x2="1" y2="1"><stop offset="0" stop-color="#c8d0dc"/><stop offset="1" stop-color="#f8f8f8"/></linearGradient></defs><rect x="0.5" y="0.5" width="12" height="12" fill="#fff" stroke="#8e8f8f"/><rect x="2.5" y="2.5" width="8" height="8" fill="url(#cbg)" stroke="#b4bac4" stroke-width="0.8"/></svg>
<svg style="left:280px;top:426px" width="13" height="13" viewBox="0 0 13 13"><defs><linearGradient id="cbg" x1="0" y1="0" x2="1" y2="1"><stop offset="0" stop-color="#c8d0dc"/><stop offset="1" stop-color="#f8f8f8"/></linearGradient></defs><rect x="0.5" y="0.5" width="12" height="12" fill="#fff" stroke="#8e8f8f"/><rect x="2.5" y="2.5" width="8" height="8" fill="url(#cbg)" stroke="#b4bac4" stroke-width="0.8"/><path d="M3.2 6.6L5.4 9.6L9.8 2.8" fill="none" stroke="#3a4f9a" stroke-width="2"/></svg>
<div style="left:23px;top:524px;width:504px;height:16px;background:#e9e9e9"></div>
<div style="left:23px;top:524px;width:504px;height:1px;background:#eeeeee"></div>
<div style="left:41px;top:524px;width:443px;height:15px;box-sizing:border-box;border:1px solid #979797;border-radius:2px;background:linear-gradient(#f4f4f4,#e8e8e8 45%,#d6d6d6 50%,#cdcdcd)"></div>
<svg style="left:259px;top:528px" width="7" height="7" viewBox="0 0 7 7"><path d="M0.5 0v7M3.5 0v7M6.5 0v7" stroke="#606060" stroke-width="1"/></svg>
<svg style="left:29px;top:528px" width="5" height="8" viewBox="0 0 5 8"><path d="M4.5 0.5L0.3 4L4.5 7.5Z" fill="#3a3a3a"/></svg>
<svg style="left:517px;top:528px" width="5" height="8" viewBox="0 0 5 8"><path d="M0.5 0.5L4.7 4L0.5 7.5Z" fill="#3a3a3a"/></svg>
<div class="t" style="left:542px;top:302px;">output</div>
<div style="left:542px;top:321px;width:509px;height:221px;box-sizing:border-box;border:1px solid #828790"></div>
<div style="left:543px;top:322px;width:507px;height:219px;background:#fff"></div>
<div style="left:543px;top:332px;width:506px;height:13px;background:#f1f2f4"></div>
<div style="left:543px;top:345px;width:506px;height:1px;background:#d5d5d5"></div>
<div style="left:558px;top:323px;width:1px;height:22px;background:#e3e4e6"></div>
<div style="left:670px;top:323px;width:1px;height:22px;background:#e3e4e6"></div>
<div style="left:705px;top:323px;width:1px;height:22px;background:#e3e4e6"></div>
<div style="left:813px;top:323px;width:1px;height:22px;background:#e3e4e6"></div>
<div style="left:869px;top:323px;width:1px;height:22px;background:#e3e4e6"></div>
<div style="left:941px;top:323px;width:1px;height:22px;background:#e3e4e6"></div>
<div style="left:986px;top:323px;width:1px;height:22px;background:#e3e4e6"></div>
<div style="left:1030px;top:323px;width:1px;height:22px;background:#e3e4e6"></div>
<div class="t" style="left:565px;top:328px;">Column</div>
<div class="t" style="left:677px;top:328px;">Key</div>
<div class="t" style="left:712px;top:328px;">Type</div>
<div class="t" style="left:848px;top:328px;">N..</div>
<div class="t" style="left:876px;top:328px;">Date Patt...</div>
<div class="t" style="left:948px;top:328px;">Len...</div>
<div class="t" style="left:993px;top:328px;">Prec...</div>
<div class="t" style="left:1037px;top:328px;">De</div>
<div style="left:544px;top:365px;width:505px;height:1px;background:#f2f2f2"></div>
<div style="left:544px;top:347px;width:511px;height:18px;box-sizing:border-box;border:1px solid #d4d4d4;border-bottom:0;border-radius:3px 3px 2px 2px;background:linear-gradient(#fdfdfd,#f2f2f2 40%,#e0e0e0)"></div>
<div style="left:558px;top:347px;width:1px;height:18px;background:#f4f4f4"></div>
<div style="left:670px;top:347px;width:1px;height:18px;background:#f4f4f4"></div>
<div style="left:705px;top:347px;width:1px;height:18px;background:#f4f4f4"></div>
<div style="left:813px;top:347px;width:1px;height:18px;background:#f4f4f4"></div>
<div style="left:869px;top:347px;width:1px;height:18px;background:#f4f4f4"></div>
<div style="left:941px;top:347px;width:1px;height:18px;background:#f4f4f4"></div>
<div style="left:986px;top:347px;width:1px;height:18px;background:#f4f4f4"></div>
<div style="left:1030px;top:347px;width:1px;height:18px;background:#f4f4f4"></div>
<div class="t" style="left:583px;top:350px;">id</div>
<div class="t" style="left:712px;top:350px;">Integer</div>
<svg style="left:682px;top:350px" width="13" height="13" viewBox="0 0 13 13"><defs><linearGradient id="cbg" x1="0" y1="0" x2="1" y2="1"><stop offset="0" stop-color="#c8d0dc"/><stop offset="1" stop-color="#f8f8f8"/></linearGradient></defs><rect x="0.5" y="0.5" width="12" height="12" fill="#fff" stroke="#8e8f8f"/><rect x="2.5" y="2.5" width="8" height="8" fill="url(#cbg)" stroke="#b4bac4" stroke-width="0.8"/></svg>
<svg style="left:836px;top:350px" width="13" height="13" viewBox="0 0 13 13"><defs><linearGradient id="cbg" x1="0" y1="0" x2="1" y2="1"><stop offset="0" stop-color="#c8d0dc"/><stop offset="1" stop-color="#f8f8f8"/></linearGradient></defs><rect x="0.5" y="0.5" width="12" height="12" fill="#fff" stroke="#8e8f8f"/><rect x="2.5" y="2.5" width="8" height="8" fill="url(#cbg)" stroke="#b4bac4" stroke-width="0.8"/><path d="M3.2 6.6L5.4 9.6L9.8 2.8" fill="none" stroke="#3a4f9a" stroke-width="2"/></svg>
<div style="left:544px;top:384px;width:505px;height:1px;background:#f2f2f2"></div>
<div style="left:544px;top:366px;width:511px;height:18px;box-sizing:border-box;border:1px solid #d4d4d4;border-bottom:0;border-radius:3px 3px 2px 2px;background:linear-gradient(#fdfdfd,#f2f2f2 40%,#e0e0e0)"></div>
<div style="left:558px;top:366px;width:1px;height:18px;background:#f4f4f4"></div>
<div style="left:670px;top:366px;width:1px;height:18px;background:#f4f4f4"></div>
<div style="left:705px;top:366px;width:1px;height:18px;background:#f4f4f4"></div>
<div style="left:813px;top:366px;width:1px;height:18px;background:#f4f4f4"></div>
<div style="left:869px;top:366px;width:1px;height:18px;background:#f4f4f4"></div>
<div style="left:941px;top:366px;width:1px;height:18px;background:#f4f4f4"></div>
<div style="left:986px;top:366px;width:1px;height:18px;background:#f4f4f4"></div>
<div style="left:1030px;top:366px;width:1px;height:18px;background:#f4f4f4"></div>
<div class="t" style="left:583px;top:369px;">firstname</div>
<div class="t" style="left:712px;top:369px;">String</div>
<svg style="left:682px;top:369px" width="13" height="13" viewBox="0 0 13 13"><defs><linearGradient id="cbg" x1="0" y1="0" x2="1" y2="1"><stop offset="0" stop-color="#c8d0dc"/><stop offset="1" stop-color="#f8f8f8"/></linearGradient></defs><rect x="0.5" y="0.5" width="12" height="12" fill="#fff" stroke="#8e8f8f"/><rect x="2.5" y="2.5" width="8" height="8" fill="url(#cbg)" stroke="#b4bac4" stroke-width="0.8"/></svg>
<svg style="left:836px;top:369px" width="13" height="13" viewBox="0 0 13 13"><defs><linearGradient id="cbg" x1="0" y1="0" x2="1" y2="1"><stop offset="0" stop-color="#c8d0dc"/><stop offset="1" stop-color="#f8f8f8"/></linearGradient></defs><rect x="0.5" y="0.5" width="12" height="12" fill="#fff" stroke="#8e8f8f"/><rect x="2.5" y="2.5" width="8" height="8" fill="url(#cbg)" stroke="#b4bac4" stroke-width="0.8"/><path d="M3.2 6.6L5.4 9.6L9.8 2.8" fill="none" stroke="#3a4f9a" stroke-width="2"/></svg>
<div style="left:544px;top:403px;width:505px;height:1px;background:#f2f2f2"></div>
<div style="left:544px;top:385px;width:511px;height:18px;box-sizing:border-box;border:1px solid #d4d4d4;border-bottom:0;border-radius:3px 3px 2px 2px;background:linear-gradient(#fdfdfd,#f2f2f2 40%,#e0e0e0)"></div>
<div style="left:558px;top:385px;width:1px;height:18px;background:#f4f4f4"></div>
<div style="left:670px;top:385px;width:1px;height:18px;background:#f4f4f4"></div>
<div style="left:705px;top:385px;width:1px;height:18px;background:#f4f4f4"></div>
<div style="left:813px;top:385px;width:1px;height:18px;background:#f4f4f4"></div>
<div style="left:869px;top:385px;width:1px;height:18px;background:#f4f4f4"></div>
<div style="left:941px;top:385px;width:1px;height:18px;background:#f4f4f4"></div>
<div style="left:986px;top:385px;width:1px;height:18px;background:#f4f4f4"></div>
<div style="left:1030px;top:385px;width:1px;height:18px;background:#f4f4f4"></div>
<div class="t" style="left:583px;top:388px;">lastname</div>
<div class="t" style="left:712px;top:388px;">String</div>
<svg style="left:682px;top:388px" width="13" height="13" viewBox="0 0 13 13"><defs><linearGradient id="cbg" x1="0" y1="0" x2="1" y2="1"><stop offset="0" stop-color="#c8d0dc"/><stop offset="1" stop-color="#f8f8f8"/></linearGradient></defs><rect x="0.5" y="0.5" width="12" height="12" fill="#fff" stroke="#8e8f8f"/><rect x="2.5" y="2.5" width="8" height="8" fill="url(#cbg)" stroke="#b4bac4" stroke-width="0.8"/></svg>
<svg style="left:836px;top:388px" width="13" height="13" viewBox="0 0 13 13"><defs><linearGradient id="cbg" x1="0" y1="0" x2="1" y2="1"><stop offset="0" stop-color="#c8d0dc"/><stop offset="1" stop-color="#f8f8f8"/></linearGradient></defs><rect x="0.5" y="0.5" width="12" height="12" fill="#fff" stroke="#8e8f8f"/><rect x="2.5" y="2.5" width="8" height="8" fill="url(#cbg)" stroke="#b4bac4" stroke-width="0.8"/><path d="M3.2 6.6L5.4 9.6L9.8 2.8" fill="none" stroke="#3a4f9a" stroke-width="2"/></svg>
<div style="left:544px;top:422px;width:505px;height:1px;background:#f2f2f2"></div>
<div style="left:544px;top:404px;width:511px;height:18px;box-sizing:border-box;border:1px solid #d4d4d4;border-bottom:0;border-radius:3px 3px 2px 2px;background:linear-gradient(#fdfdfd,#f2f2f2 40%,#e0e0e0)"></div>
<div style="left:558px;top:404px;width:1px;height:18px;background:#f4f4f4"></div>
<div style="left:670px;top:404px;width:1px;height:18px;background:#f4f4f4"></div>
<div style="left:705px;top:404px;width:1px;height:18px;background:#f4f4f4"></div>
<div style="left:813px;top:404px;width:1px;height:18px;background:#f4f4f4"></div>
<div style="left:869px;top:404px;width:1px;height:18px;background:#f4f4f4"></div>
<div style="left:941px;top:404px;width:1px;height:18px;background:#f4f4f4"></div>
<div style="left:986px;top:404px;width:1px;height:18px;background:#f4f4f4"></div>
<div style="left:1030px;top:404px;width:1px;height:18px;background:#f4f4f4"></div>
<div class="t" style="left:583px;top:407px;">city</div>
<div class="t" style="left:712px;top:407px;">String</div>
<svg style="left:682px;top:407px" width="13" height="13" viewBox="0 0 13 13"><defs><linearGradient id="cbg" x1="0" y1="0" x2="1" y2="1"><stop offset="0" stop-color="#c8d0dc"/><stop offset="1" stop-color="#f8f8f8"/></linearGradient></defs><rect x="0.5" y="0.5" width="12" height="12" fill="#fff" stroke="#8e8f8f"/><rect x="2.5" y="2.5" width="8" height="8" fill="url(#cbg)" stroke="#b4bac4" stroke-width="0.8"/></svg>
<svg style="left:836px;top:407px" width="13" height="13" viewBox="0 0 13 13"><defs><linearGradient id="cbg" x1="0" y1="0" x2="1" y2="1"><stop offset="0" stop-color="#c8d0dc"/><stop offset="1" stop-color="#f8f8f8"/></linearGradient></defs><rect x="0.5" y="0.5" width="12" height="12" fill="#fff" stroke="#8e8f8f"/><rect x="2.5" y="2.5" width="8" height="8" fill="url(#cbg)" stroke="#b4bac4" stroke-width="0.8"/><path d="M3.2 6.6L5.4 9.6L9.8 2.8" fill="none" stroke="#3a4f9a" stroke-width="2"/></svg>
<div style="left:544px;top:441px;width:505px;height:1px;background:#f2f2f2"></div>
<div style="left:544px;top:423px;width:511px;height:18px;box-sizing:border-box;border:1px solid #d4d4d4;border-bottom:0;border-radius:3px 3px 2px 2px;background:linear-gradient(#fdfdfd,#f2f2f2 40%,#e0e0e0)"></div>
<div style="left:558px;top:423px;width:1px;height:18px;background:#f4f4f4"></div>
<div style="left:670px;top:423px;width:1px;height:18px;background:#f4f4f4"></div>
<div style="left:705px;top:423px;width:1px;height:18px;background:#f4f4f4"></div>
<div style="left:813px;top:423px;width:1px;height:18px;background:#f4f4f4"></div>
<div style="left:869px;top:423px;width:1px;height:18px;background:#f4f4f4"></div>
<div style="left:941px;top:423px;width:1px;height:18px;background:#f4f4f4"></div>
<div style="left:986px;top:423px;width:1px;height:18px;background:#f4f4f4"></div>
<div style="left:1030px;top:423px;width:1px;height:18px;background:#f4f4f4"></div>
<div class="t" style="left:583px;top:426px;">state</div>
<div class="t" style="left:712px;top:426px;">String</div>
<svg style="left:682px;top:426px" width="13" height="13" viewBox="0 0 13 13"><defs><linearGradient id="cbg" x1="0" y1="0" x2="1" y2="1"><stop offset="0" stop-color="#c8d0dc"/><stop offset="1" stop-color="#f8f8f8"/></linearGradient></defs><rect x="0.5" y="0.5" width="12" height="12" fill="#fff" stroke="#8e8f8f"/><rect x="2.5" y="2.5" width="8" height="8" fill="url(#cbg)" stroke="#b4bac4" stroke-width="0.8"/></svg>
<svg style="left:836px;top:426px" width="13" height="13" viewBox="0 0 13 13"><defs><linearGradient id="cbg" x1="0" y1="0" x2="1" y2="1"><stop offset="0" stop-color="#c8d0dc"/><stop offset="1" stop-color="#f8f8f8"/></linearGradient></defs><rect x="0.5" y="0.5" width="12" height="12" fill="#fff" stroke="#8e8f8f"/><rect x="2.5" y="2.5" width="8" height="8" fill="url(#cbg)" stroke="#b4bac4" stroke-width="0.8"/><path d="M3.2 6.6L5.4 9.6L9.8 2.8" fill="none" stroke="#3a4f9a" stroke-width="2"/></svg>
<div style="left:544px;top:524px;width:505px;height:16px;background:#e9e9e9"></div>
<div style="left:544px;top:524px;width:505px;height:1px;background:#eeeeee"></div>
<div style="left:562px;top:524px;width:418px;height:15px;box-sizing:border-box;border:1px solid #979797;border-radius:2px;background:linear-gradient(#f4f4f4,#e8e8e8 45%,#d6d6d6 50%,#cdcdcd)"></div>
<svg style="left:767px;top:528px" width="7" height="7" viewBox="0 0 7 7"><path d="M0.5 0v7M3.5 0v7M6.5 0v7" stroke="#606060" stroke-width="1"/></svg>
<svg style="left:550px;top:528px" width="5" height="8" viewBox="0 0 5 8"><path d="M4.5 0.5L0.3 4L4.5 7.5Z" fill="#3a3a3a"/></svg>
<svg style="left:1039px;top:528px" width="5" height="8" viewBox="0 0 5 8"><path d="M0.5 0.5L4.7 4L0.5 7.5Z" fill="#3a3a3a"/></svg>
<svg style="left:266px;top:329px" width="12" height="12" viewBox="0 0 12 12"><rect x="0.5" y="0.5" width="11" height="11" fill="#fff" stroke="#6e6c50"/><path d="M2.5 6L5 8.8L9.5 2.8" fill="none" stroke="#111" stroke-width="1.4"/></svg>
<svg style="left:822px;top:329px" width="12" height="12" viewBox="0 0 12 12"><rect x="0.5" y="0.5" width="11" height="11" fill="#fff" stroke="#6e6c50"/><path d="M2.5 6L5 8.8L9.5 2.8" fill="none" stroke="#111" stroke-width="1.4"/></svg>
<div style="left:529px;top:322px;width:13px;height:219px;background:#f0f0f0"></div>
<div style="left:528px;top:321px;width:1px;height:221px;background:#828790"></div>
<div style="left:1051px;top:322px;width:5px;height:219px;background:#f0f0f0"></div>
<div style="left:1050px;top:321px;width:1px;height:221px;background:#828790"></div>
<div style="left:1049px;top:322px;width:1px;height:202px;background:#fff"></div>
<div style="left:25px;top:551px;width:26px;height:24px;box-sizing:border-box;border-radius:3px;border:1px solid #707070;box-shadow:inset 0 0 0 1px #fcfcfc;background:linear-gradient(#f2f2f2,#ebebeb 50%,#dddddd 51%,#cfcfcf)"></div>
<div style="left:56px;top:551px;width:26px;height:24px;box-sizing:border-box;border-radius:3px;border:1px solid #adb2b5;background:#f4f4f4"></div>
<div style="left:87px;top:551px;width:26px;height:24px;box-sizing:border-box;border-radius:3px;border:1px solid #adb2b5;background:#f4f4f4"></div>
<div style="left:118px;top:551px;width:26px;height:24px;box-sizing:border-box;border-radius:3px;border:1px solid #adb2b5;background:#f4f4f4"></div>
<div style="left:149px;top:551px;width:26px;height:24px;box-sizing:border-box;border-radius:3px;border:1px solid #adb2b5;background:#f4f4f4"></div>
<div style="left:180px;top:551px;width:26px;height:24px;box-sizing:border-box;border-radius:3px;border:1px solid #707070;box-shadow:inset 0 0 0 1px #fcfcfc;background:linear-gradient(#f2f2f2,#ebebeb 50%,#dddddd 51%,#cfcfcf)"></div>
<div style="left:211px;top:551px;width:26px;height:24px;box-sizing:border-box;border-radius:3px;border:1px solid #707070;box-shadow:inset 0 0 0 1px #fcfcfc;background:linear-gradient(#f2f2f2,#ebebeb 50%,#dddddd 51%,#cfcfcf)"></div>
<div style="left:242px;top:551px;width:26px;height:24px;box-sizing:border-box;border-radius:3px;border:1px solid #707070;box-shadow:inset 0 0 0 1px #fcfcfc;background:linear-gradient(#f2f2f2,#ebebeb 50%,#dddddd 51%,#cfcfcf)"></div>
<div style="left:273px;top:551px;width:26px;height:24px;box-sizing:border-box;border-radius:3px;border:1px solid #707070;box-shadow:inset 0 0 0 1px #fcfcfc;background:linear-gradient(#f2f2f2,#ebebeb 50%,#dddddd 51%,#cfcfcf)"></div>
<svg style="left:32px;top:556px" width="12" height="12" viewBox="0 0 12 12"><defs><linearGradient id="pg" x1="0" y1="0" x2="0" y2="1"><stop offset="0" stop-color="#f2f462"/><stop offset="1" stop-color="#98c040"/></linearGradient></defs><path d="M4.5 0.5h3v4h4v3h-4v4h-3v-4h-4v-3h4z" fill="url(#pg)" stroke="#2e8a4c" stroke-width="1"/></svg>
<svg style="left:63px;top:556px" width="13" height="13" viewBox="0 0 13 13"><path d="M2 2L11 11M11 2L2 11" stroke="#c4c4c4" stroke-width="3.6" stroke-linecap="round"/></svg>
<svg style="left:94px;top:555px" width="13" height="14" viewBox="0 0 13 14"><path d="M6.5 0.8L12.2 6.5H9.5V13.5H3.5V6.5H0.8Z" fill="#f8f8f8" stroke="#c8c8c8" stroke-width="1.05" stroke-linejoin="round"/></svg>
<svg style="left:125px;top:555px" width="13" height="14" viewBox="0 0 13 14"><path d="M6.5 13.2L12.2 7.5H9.5V0.5H3.5V7.5H0.8Z" fill="#f8f8f8" stroke="#c8c8c8" stroke-width="1.05" stroke-linejoin="round"/></svg>
<svg style="left:155px;top:555px" width="16" height="16" viewBox="0 0 16 16"><path d="M0.5 0.5H7.5L8.5 1.5V14.5H0.5Z" fill="#fff" stroke="#c8c8c8"/><path d="M1.5 4.5H4M1.5 6.5H4M1.5 8.5H4M1.5 10.5H4M1.5 12.5H4" stroke="#c8c8c8"/><path d="M4.5 1.5H11.5L14.5 4.5V15.5H4.5Z" fill="#fff" stroke="#c4c4c4"/><path d="M6 5.5H12M6 7.5H13M6 9.5H13M6 11.5H13M6 13.5H12" stroke="#c8c8c8"/></svg>
<svg style="left:186px;top:555px" width="16" height="16" viewBox="0 0 16 16"><defs><linearGradient id="clg" x1="0" y1="0" x2="0" y2="1"><stop offset="0" stop-color="#fce8b8"/><stop offset="1" stop-color="#f0b860"/></linearGradient></defs><rect x="1.5" y="2.5" width="11" height="13" rx="1.5" fill="url(#clg)" stroke="#c8883a"/><rect x="3.5" y="0.5" width="7" height="3.5" rx="1" fill="#7890b8" stroke="#58709a"/><path d="M6.5 6.5H11.5L14.5 9.5V15.5H6.5Z" fill="#fff" stroke="#7888a8"/><path d="M8 9.5H10M8 11.5H13M8 13.5H13" stroke="#4a68ac"/></svg>
<svg style="left:217px;top:555px" width="16" height="17" viewBox="0 0 16 17"><defs><linearGradient id="flg" x1="0" y1="0" x2="0" y2="1"><stop offset="0" stop-color="#fff4d0"/><stop offset="1" stop-color="#f6c870"/></linearGradient></defs><path d="M1.5 1.5H5.5L7 3H13.5V11.5H1.5Z" fill="#f8d890" stroke="#d09038"/><path d="M1.5 4.5H13.5V11.5H1.5Z" fill="url(#flg)" stroke="#d09038" stroke-width="0.9"/><path d="M5 6.5H8V10.5H10.5V8L15 12L10.5 16V13.5H5Z" fill="#a8dcc8" stroke="#2a64a8" stroke-width="1" stroke-linejoin="round"/></svg>
<svg style="left:248px;top:555px" width="16" height="17" viewBox="0 0 16 17"><defs><linearGradient id="flg" x1="0" y1="0" x2="0" y2="1"><stop offset="0" stop-color="#fff4d0"/><stop offset="1" stop-color="#f6c870"/></linearGradient></defs><path d="M1.5 1.5H5.5L7 3H13.5V11.5H1.5Z" fill="#f8d890" stroke="#d09038"/><path d="M1.5 4.5H13.5V11.5H1.5Z" fill="url(#flg)" stroke="#d09038" stroke-width="0.9"/><path d="M8.5 4.5L13 9H10.5V11.5C10.5 12.5 11 13 12.5 13V15.5C9 15.5 7 14 7 11.5V9H4Z" fill="#a8dcc8" stroke="#2a64a8" stroke-width="1" stroke-linejoin="round"/></svg>
<svg style="left:279px;top:556px" width="15" height="15" viewBox="0 0 15 15"><path d="M0.5 0.5H13.5V14.5H0.5Z" fill="#4848d0" stroke="#2828a0"/><rect x="3" y="1" width="8" height="6" fill="#fff"/><path d="M4 3.5H10M4 5.5H10" stroke="#b8b8c8" stroke-width="0.7"/><rect x="3" y="9.5" width="8" height="5" fill="#ecebf0"/><rect x="4" y="10.5" width="2" height="3.5" fill="#2828a0"/></svg>
<div style="left:546px;top:551px;width:26px;height:24px;box-sizing:border-box;border-radius:3px;border:1px solid #3c7fb1;box-shadow:inset 0 0 0 1px #c8ecfc;background:linear-gradient(#eaf6fd,#d9f0fc 50%,#bee6fd 51%,#a7d9f5)"></div>
<div style="left:577px;top:551px;width:26px;height:24px;box-sizing:border-box;border-radius:3px;border:1px solid #707070;box-shadow:inset 0 0 0 1px #fcfcfc;background:linear-gradient(#f2f2f2,#ebebeb 50%,#dddddd 51%,#cfcfcf)"></div>
<div style="left:608px;top:551px;width:26px;height:24px;box-sizing:border-box;border-radius:3px;border:1px solid #707070;box-shadow:inset 0 0 0 1px #fcfcfc;background:linear-gradient(#f2f2f2,#ebebeb 50%,#dddddd 51%,#cfcfcf)"></div>
<div style="left:639px;top:551px;width:26px;height:24px;box-sizing:border-box;border-radius:3px;border:1px solid #707070;box-shadow:inset 0 0 0 1px #fcfcfc;background:linear-gradient(#f2f2f2,#ebebeb 50%,#dddddd 51%,#cfcfcf)"></div>
<div style="left:670px;top:551px;width:26px;height:24px;box-sizing:border-box;border-radius:3px;border:1px solid #707070;box-shadow:inset 0 0 0 1px #fcfcfc;background:linear-gradient(#f2f2f2,#ebebeb 50%,#dddddd 51%,#cfcfcf)"></div>
<div style="left:701px;top:551px;width:26px;height:24px;box-sizing:border-box;border-radius:3px;border:1px solid #707070;box-shadow:inset 0 0 0 1px #fcfcfc;background:linear-gradient(#f2f2f2,#ebebeb 50%,#dddddd 51%,#cfcfcf)"></div>
<div style="left:732px;top:551px;width:26px;height:24px;box-sizing:border-box;border-radius:3px;border:1px solid #707070;box-shadow:inset 0 0 0 1px #fcfcfc;background:linear-gradient(#f2f2f2,#ebebeb 50%,#dddddd 51%,#cfcfcf)"></div>
<div style="left:763px;top:551px;width:26px;height:24px;box-sizing:border-box;border-radius:3px;border:1px solid #707070;box-shadow:inset 0 0 0 1px #fcfcfc;background:linear-gradient(#f2f2f2,#ebebeb 50%,#dddddd 51%,#cfcfcf)"></div>
<div style="left:794px;top:551px;width:26px;height:24px;box-sizing:border-box;border-radius:3px;border:1px solid #707070;box-shadow:inset 0 0 0 1px #fcfcfc;background:linear-gradient(#f2f2f2,#ebebeb 50%,#dddddd 51%,#cfcfcf)"></div>
<svg style="left:553px;top:556px" width="12" height="12" viewBox="0 0 12 12"><defs><linearGradient id="pg" x1="0" y1="0" x2="0" y2="1"><stop offset="0" stop-color="#f2f462"/><stop offset="1" stop-color="#98c040"/></linearGradient></defs><path d="M4.5 0.5h3v4h4v3h-4v4h-3v-4h-4v-3h4z" fill="url(#pg)" stroke="#2e8a4c" stroke-width="1"/></svg>
<svg style="left:584px;top:556px" width="13" height="13" viewBox="0 0 13 13"><path d="M2.5 2.5L10.5 10.5M10.5 2.5L2.5 10.5" stroke="#d83848" stroke-width="4.2" stroke-linecap="round"/><path d="M2.5 2.5L10.5 10.5M10.5 2.5L2.5 10.5" stroke="#f06a78" stroke-width="2.2" stroke-linecap="round"/></svg>
<svg style="left:614px;top:554px" width="14" height="15" viewBox="0 0 14 15"><path d="M7 1L13 7.5H9.8V14H4.2V7.5H1Z" fill="#ffd860" stroke="#c88a10" stroke-width="1.1" stroke-linejoin="round"/></svg>
<svg style="left:645px;top:554px" width="14" height="15" viewBox="0 0 14 15"><path d="M7 14L13 7.5H9.8V1H4.2V7.5H1Z" fill="#ffd860" stroke="#c88a10" stroke-width="1.1" stroke-linejoin="round"/></svg>
<svg style="left:676px;top:555px" width="16" height="16" viewBox="0 0 16 16"><path d="M0.5 0.5H7.5L8.5 1.5V14.5H0.5Z" fill="#fff" stroke="#b8a060"/><path d="M1.5 4.5H4M1.5 6.5H4M1.5 8.5H4M1.5 10.5H4M1.5 12.5H4" stroke="#4a68ac"/><path d="M4.5 1.5H11.5L14.5 4.5V15.5H4.5Z" fill="#fff" stroke="#a89860"/><path d="M6 5.5H12M6 7.5H13M6 9.5H13M6 11.5H13M6 13.5H12" stroke="#4a68ac"/></svg>
<svg style="left:707px;top:555px" width="16" height="16" viewBox="0 0 16 16"><defs><linearGradient id="clg" x1="0" y1="0" x2="0" y2="1"><stop offset="0" stop-color="#fce8b8"/><stop offset="1" stop-color="#f0b860"/></linearGradient></defs><rect x="1.5" y="2.5" width="11" height="13" rx="1.5" fill="url(#clg)" stroke="#c8883a"/><rect x="3.5" y="0.5" width="7" height="3.5" rx="1" fill="#7890b8" stroke="#58709a"/><path d="M6.5 6.5H11.5L14.5 9.5V15.5H6.5Z" fill="#fff" stroke="#7888a8"/><path d="M8 9.5H10M8 11.5H13M8 13.5H13" stroke="#4a68ac"/></svg>
<svg style="left:738px;top:555px" width="16" height="17" viewBox="0 0 16 17"><defs><linearGradient id="flg" x1="0" y1="0" x2="0" y2="1"><stop offset="0" stop-color="#fff4d0"/><stop offset="1" stop-color="#f6c870"/></linearGradient></defs><path d="M1.5 1.5H5.5L7 3H13.5V11.5H1.5Z" fill="#f8d890" stroke="#d09038"/><path d="M1.5 4.5H13.5V11.5H1.5Z" fill="url(#flg)" stroke="#d09038" stroke-width="0.9"/><path d="M5 6.5H8V10.5H10.5V8L15 12L10.5 16V13.5H5Z" fill="#a8dcc8" stroke="#2a64a8" stroke-width="1" stroke-linejoin="round"/></svg>
<svg style="left:769px;top:555px" width="16" height="17" viewBox="0 0 16 17"><defs><linearGradient id="flg" x1="0" y1="0" x2="0" y2="1"><stop offset="0" stop-color="#fff4d0"/><stop offset="1" stop-color="#f6c870"/></linearGradient></defs><path d="M1.5 1.5H5.5L7 3H13.5V11.5H1.5Z" fill="#f8d890" stroke="#d09038"/><path d="M1.5 4.5H13.5V11.5H1.5Z" fill="url(#flg)" stroke="#d09038" stroke-width="0.9"/><path d="M8.5 4.5L13 9H10.5V11.5C10.5 12.5 11 13 12.5 13V15.5C9 15.5 7 14 7 11.5V9H4Z" fill="#a8dcc8" stroke="#2a64a8" stroke-width="1" stroke-linejoin="round"/></svg>
<svg style="left:800px;top:556px" width="15" height="15" viewBox="0 0 15 15"><path d="M0.5 0.5H13.5V14.5H0.5Z" fill="#4848d0" stroke="#2828a0"/><rect x="3" y="1" width="8" height="6" fill="#fff"/><path d="M4 3.5H10M4 5.5H10" stroke="#b8b8c8" stroke-width="0.7"/><rect x="3" y="9.5" width="8" height="5" fill="#ecebf0"/><rect x="4" y="10.5" width="2" height="3.5" fill="#2828a0"/></svg>
<div style="left:715px;top:593px;width:98px;height:23px;box-sizing:border-box;border:1px solid #707070;border-radius:3px;background:linear-gradient(#f2f2f2 0,#ebebeb 10px,#dddddd 11px,#cfcfcf 100%);box-shadow:inset 0 0 0 1px #fcfcfc"></div>
<div class="t" style="left:748px;top:598px;">Apply</div>
<div style="left:835px;top:593px;width:98px;height:23px;box-sizing:border-box;border:1px solid #707070;border-radius:3px;background:linear-gradient(#f2f2f2 0,#ebebeb 10px,#dddddd 11px,#cfcfcf 100%);box-shadow:inset 0 0 0 1px #fcfcfc"></div>
<div class="t" style="left:876px;top:598px;">Ok</div>
<div style="left:955px;top:593px;width:98px;height:23px;box-sizing:border-box;border:1px solid #707070;border-radius:3px;background:linear-gradient(#f2f2f2 0,#ebebeb 10px,#dddddd 11px,#cfcfcf 100%);box-shadow:inset 0 0 0 1px #fcfcfc"></div>
<div class="t" style="left:987px;top:598px;">Cancel</div>
</body></html>
